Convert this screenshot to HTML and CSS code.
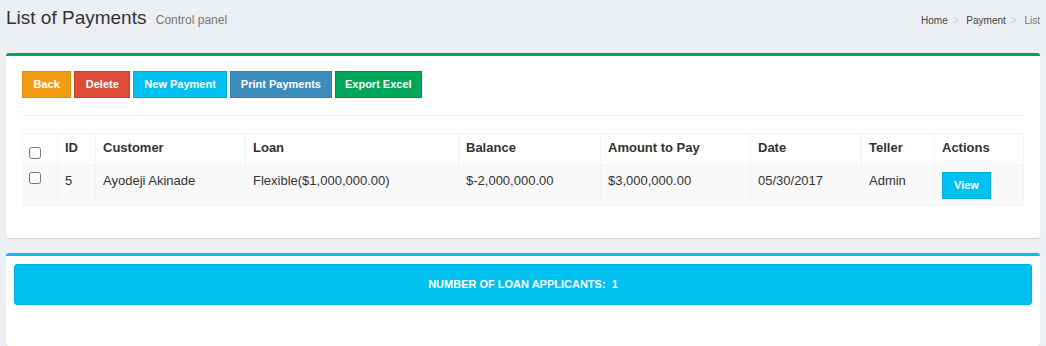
FILE: index.html
```html
<!DOCTYPE html>
<html lang="en">
<head>
    <meta charset="UTF-8">
    <title>List of Payments</title>
    <link rel="stylesheet" href="styles.css">
</head>
<body>
    <div class="content-wrapper">
        <section class="content-header">
            <h1 class="page-title">List of Payments <small>Control panel</small></h1>
            <ol class="breadcrumb">
                <li><a href="#">Home</a></li>
                <li><a href="#">Payment</a></li>
                <li class="active">List</li>
            </ol>
        </section>

        <div class="box box-success">
            <div class="box-body">
                <div class="btn-row">
                    <a class="btn btn-warning">Back</a>
                    <a class="btn btn-danger">Delete</a>
                    <a class="btn btn-info">New Payment</a>
                    <a class="btn btn-primary">Print Payments</a>
                    <a class="btn btn-success">Export Excel</a>
                </div>
                <hr class="divider">
                <table class="table">
                    <colgroup>
                        <col class="c-check">
                        <col class="c-id">
                        <col class="c-customer">
                        <col class="c-loan">
                        <col class="c-balance">
                        <col class="c-amount">
                        <col class="c-date">
                        <col class="c-teller">
                        <col class="c-actions">
                    </colgroup>
                    <thead>
                        <tr>
                            <th class="check-cell"><input type="checkbox" class="check"></th>
                            <th>ID</th>
                            <th>Customer</th>
                            <th>Loan</th>
                            <th>Balance</th>
                            <th>Amount to Pay</th>
                            <th>Date</th>
                            <th>Teller</th>
                            <th>Actions</th>
                        </tr>
                    </thead>
                    <tbody>
                        <tr>
                            <td class="check-cell"><input type="checkbox" class="check"></td>
                            <td>5</td>
                            <td>Ayodeji Akinade</td>
                            <td>Flexible($1,000,000.00)</td>
                            <td>$-2,000,000.00</td>
                            <td>$3,000,000.00</td>
                            <td>05/30/2017</td>
                            <td>Admin</td>
                            <td><a class="btn btn-info btn-view">View</a></td>
                        </tr>
                    </tbody>
                </table>
            </div>
        </div>

        <div class="box box-info box-last">
            <div class="box-body small-pad">
                <div class="callout">NUMBER OF LOAN APPLICANTS:&nbsp; 1</div>
            </div>
        </div>
    </div>
</body>
</html>
```

FILE: styles.css
```css
html, body {
    margin: 0;
    height: 100%;
}
body {
    background: #ecf0f5;
    color: #333;
    font-family: "Liberation Sans", Arial, sans-serif;
    font-size: 13px;
    overflow: hidden;
}
a {
    text-decoration: none;
}
.content-wrapper {
    padding: 0 6px;
}

/* header */
.content-header {
    display: flex;
    justify-content: space-between;
    align-items: baseline;
    height: 53px;
    box-sizing: border-box;
    padding-top: 7px;
}
.page-title {
    margin: 0;
    font-size: 19px;
    font-weight: normal;
    line-height: 1.2;
    color: #333;
}
.page-title small {
    font-size: 12px;
    color: #777;
    margin-left: 4px;
}
.breadcrumb {
    display: flex;
    list-style: none;
    margin: 0;
    padding: 0;
    font-size: 10px;
}
.breadcrumb a {
    color: #444;
}
.breadcrumb li + li:before {
    content: ">\00a0";
    color: #ccc;
    padding: 0 5px;
}
.breadcrumb .active {
    color: #777;
}

/* boxes */
.box {
    background: #fff;
    border-top: 3px solid #d2d6de;
    border-radius: 3px;
    box-shadow: 0 1px 1px rgba(0,0,0,0.1);
    margin-bottom: 15px;
}
.box-success {
    border-top-color: #00a65a;
}
.box-info {
    border-top-color: #00c0ef;
}
.box-last {
    min-height: 90px;
    margin-bottom: 0;
}
.box-body {
    padding: 15px 17px 12px 16px;
}
.box-body.small-pad {
    padding: 8px;
}

/* buttons */
.btn-row {
    display: flex;
    gap: 3px;
}
.btn {
    display: inline-block;
    height: 27px;
    line-height: 25px;
    box-sizing: border-box;
    padding: 0 10px;
    border: 1px solid transparent;
    color: #fff;
    font-size: 11px;
    font-weight: bold;
    cursor: pointer;
}
.btn-warning { background: #f39c12; border-color: #e08e0b; padding: 0 10.5px; }
.btn-danger { background: #dd4b39; border-color: #d73925; padding: 0 10.5px; }
.btn-info { background: #00c0ef; border-color: #00acd6; }
.btn-primary { background: #3c8dbc; border-color: #367fa9; }
.btn-success { background: #00a65a; border-color: #008d4c; padding: 0 9px; }
.btn-view { padding: 0 11px; }

.divider {
    border: 0;
    border-top: 1px solid #eee;
    margin: 17px 0;
}

/* table */
.table {
    width: 100%;
    table-layout: fixed;
    border-collapse: collapse;
    border: 1px solid #f4f4f4;
    margin-bottom: 20px;
}
.c-check { width: 35px; }
.c-id { width: 38px; }
.c-customer { width: 150px; }
.c-loan { width: 213px; }
.c-balance { width: 142px; }
.c-amount { width: 150px; }
.c-date { width: 111px; }
.c-teller { width: 73px; }
.c-actions { width: 89px; }
.table th,
.table td {
    border: 1px solid #f4f4f4;
    text-align: left;
    line-height: 17px;
}
.table th {
    padding: 5px 7px 8px;
    font-weight: bold;
    vertical-align: top;
}
.table td {
    padding: 7px 7px 6px;
    vertical-align: top;
}
.table th.check-cell {
    vertical-align: bottom;
    padding: 0 6px 5px;
}
.table td.check-cell {
    padding-left: 6px;
}
.table tbody tr {
    background: #f9f9f9;
}
.check {
    display: block;
    margin: 0;
    width: 12px;
    height: 12px;
}

/* callout */
.callout {
    background: #00c0ef;
    border: 1px solid #00b1dc;
    border-radius: 3px;
    color: #fff;
    font-size: 11px;
    font-weight: bold;
    text-align: center;
    line-height: 15px;
    padding: 12px 15px;
}
```
